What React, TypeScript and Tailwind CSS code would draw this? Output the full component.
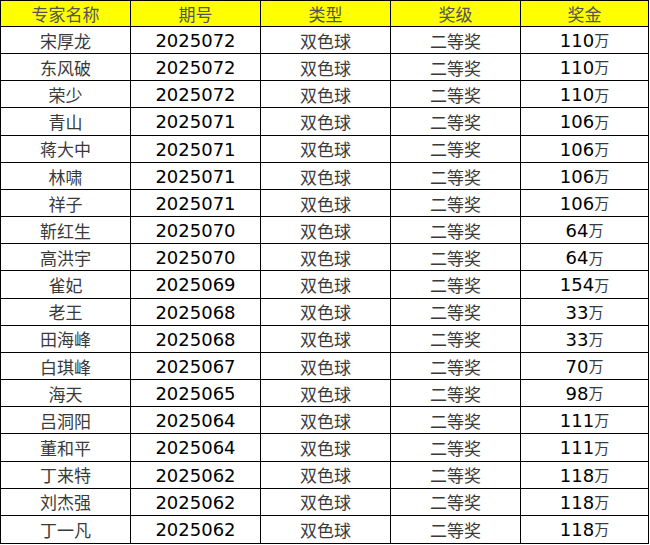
const rows: [string, string, string][] = [
  ['宋厚龙', '2025072', '110'],
  ['东风破', '2025072', '110'],
  ['荣少', '2025072', '110'],
  ['青山', '2025071', '106'],
  ['蒋大中', '2025071', '106'],
  ['林啸', '2025071', '106'],
  ['祥子', '2025071', '106'],
  ['靳红生', '2025070', '64'],
  ['高洪宇', '2025070', '64'],
  ['雀妃', '2025069', '154'],
  ['老王', '2025068', '33'],
  ['田海峰', '2025068', '33'],
  ['白琪峰', '2025067', '70'],
  ['海天', '2025065', '98'],
  ['吕洞阳', '2025064', '111'],
  ['董和平', '2025064', '111'],
  ['丁来特', '2025062', '118'],
  ['刘杰强', '2025062', '118'],
  ['丁一凡', '2025062', '118'],
];

const cjk = "font-['Noto_Sans_CJK_SC',sans-serif]";
const num = "font-['DejaVu_Sans','Noto_Sans_CJK_SC',sans-serif]";

export default function App() {
  const headers = ['专家名称', '期号', '类型', '奖级', '奖金'];
  return (
    <div className="w-[650px] h-[545px] bg-white">
      <div className="w-[649px] border border-black">
        <div className="grid grid-cols-[130px_130px_130px_130px_127px] h-[26px] bg-[#ffff00] border-b border-black">
          {headers.map((h, i) => (
            <div
              key={h}
              className={`flex items-center justify-center text-[17px] text-[#555] ${cjk} ${i < 4 ? 'border-r border-black' : ''}`}
            >
              {h}
            </div>
          ))}
        </div>
        {rows.map(([name, issue, prize], idx) => (
          <div
            key={idx}
            className={`grid grid-cols-[130px_130px_130px_130px_127px] h-[27.16px] ${idx < rows.length - 1 ? 'border-b border-black' : ''}`}
          >
            <div className={`flex items-center justify-center border-r border-black text-[17px] text-[#3a3a3a] ${cjk}`}>
              {name}
            </div>
            <div className={`flex items-center justify-center border-r border-black text-[18px] text-black ${num}`}>
              {issue}
            </div>
            <div className={`flex items-center justify-center border-r border-black text-[17px] text-[#3a3a3a] ${cjk}`}>
              双色球
            </div>
            <div className={`flex items-center justify-center border-r border-black text-[17px] text-[#3a3a3a] ${cjk}`}>
              二等奖
            </div>
            <div className="flex items-center justify-center text-black">
              <span className={`text-[18px] ${num}`}>{prize}</span>
              <span className={`text-[15px] text-[#3a3a3a] ${cjk}`}>万</span>
            </div>
          </div>
        ))}
      </div>
    </div>
  );
}
